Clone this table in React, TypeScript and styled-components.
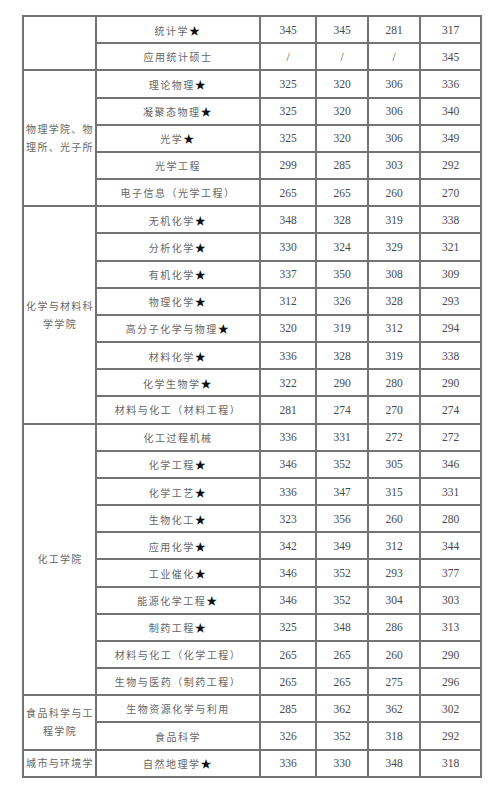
import React from 'react';
import styled, { createGlobalStyle } from 'styled-components';

const GlobalStyle = createGlobalStyle`
  html, body {
    margin: 0;
    padding: 0;
    background: #ffffff;
  }
`;

const Page = styled.div`
  padding: 15px 0 0 22px;
  width: 500px;
  box-sizing: border-box;
`;

const Table = styled.table`
  border-collapse: collapse;
  table-layout: fixed;
  width: 458px;
  border: 2px solid #707070;
`;

const Row = styled.tr`
  height: 27.18px;
`;

const Cell = styled.td`
  border: 2px solid #737373;
  padding: 0;
  text-align: center;
  vertical-align: middle;
  color: #555555;
`;

const CollegeCell = styled(Cell)`
  font-family: 'Noto Sans CJK SC', sans-serif;
  font-size: 10px;
  letter-spacing: 1.3px;
  line-height: 18px;
  padding: 0 0 0 1px;
  color: #666666;
`;

const MajorCell = styled(Cell)`
  font-family: 'Noto Sans CJK SC', sans-serif;
  font-size: 10px;
  letter-spacing: 1.5px;
  white-space: nowrap;
  color: #666666;
`;

const NumCell = styled(Cell)`
  font-family: 'Liberation Serif', 'Times New Roman', serif;
  font-size: 11.5px;
  color: #4a4a4a;
`;

const Star = styled.span`
  color: #111111;
  font-size: 11px;
`;

type Major = { name: string; star?: boolean; scores: string[] };
type Group = { college: string; majors: Major[] };

const groups: Group[] = [
  {
    college: '',
    majors: [
      { name: '统计学', star: true, scores: ['345', '345', '281', '317'] },
      { name: '应用统计硕士', scores: ['/', '/', '/', '345'] },
    ],
  },
  {
    college: '物理学院、物理所、光子所',
    majors: [
      { name: '理论物理', star: true, scores: ['325', '320', '306', '336'] },
      { name: '凝聚态物理', star: true, scores: ['325', '320', '306', '340'] },
      { name: '光学', star: true, scores: ['325', '320', '306', '349'] },
      { name: '光学工程', scores: ['299', '285', '303', '292'] },
      { name: '电子信息（光学工程）', scores: ['265', '265', '260', '270'] },
    ],
  },
  {
    college: '化学与材料科学学院',
    majors: [
      { name: '无机化学', star: true, scores: ['348', '328', '319', '338'] },
      { name: '分析化学', star: true, scores: ['330', '324', '329', '321'] },
      { name: '有机化学', star: true, scores: ['337', '350', '308', '309'] },
      { name: '物理化学', star: true, scores: ['312', '326', '328', '293'] },
      { name: '高分子化学与物理', star: true, scores: ['320', '319', '312', '294'] },
      { name: '材料化学', star: true, scores: ['336', '328', '319', '338'] },
      { name: '化学生物学', star: true, scores: ['322', '290', '280', '290'] },
      { name: '材料与化工（材料工程）', scores: ['281', '274', '270', '274'] },
    ],
  },
  {
    college: '化工学院',
    majors: [
      { name: '化工过程机械', scores: ['336', '331', '272', '272'] },
      { name: '化学工程', star: true, scores: ['346', '352', '305', '346'] },
      { name: '化学工艺', star: true, scores: ['336', '347', '315', '331'] },
      { name: '生物化工', star: true, scores: ['323', '356', '260', '280'] },
      { name: '应用化学', star: true, scores: ['342', '349', '312', '344'] },
      { name: '工业催化', star: true, scores: ['346', '352', '293', '377'] },
      { name: '能源化学工程', star: true, scores: ['346', '352', '304', '303'] },
      { name: '制药工程', star: true, scores: ['325', '348', '286', '313'] },
      { name: '材料与化工（化学工程）', scores: ['265', '265', '260', '290'] },
      { name: '生物与医药（制药工程）', scores: ['265', '265', '275', '296'] },
    ],
  },
  {
    college: '食品科学与工程学院',
    majors: [
      { name: '生物资源化学与利用', scores: ['285', '362', '362', '302'] },
      { name: '食品科学', scores: ['326', '352', '318', '292'] },
    ],
  },
  {
    college: '城市与环境学',
    majors: [{ name: '自然地理学', star: true, scores: ['336', '330', '348', '318'] }],
  },
];

const widths = [73, 164, 56, 52, 52, 61];

const App = () => {
  return (
    <>
      <GlobalStyle />
      <Page>
        <Table>
          <colgroup>
            {widths.map((w, i) => (
              <col key={i} style={{ width: w }} />
            ))}
          </colgroup>
          <tbody>
            {groups.map((g, gi) =>
              g.majors.map((m, mi) => (
                <Row key={`${gi}-${mi}`}>
                  {mi === 0 && (
                    <CollegeCell rowSpan={g.majors.length}>{g.college}</CollegeCell>
                  )}
                  <MajorCell>
                    {m.name}
                    {m.star && <Star>★</Star>}
                  </MajorCell>
                  {m.scores.map((s, si) => (
                    <NumCell key={si}>{s}</NumCell>
                  ))}
                </Row>
              ))
            )}
          </tbody>
        </Table>
      </Page>
    </>
  );
};

export default App;
